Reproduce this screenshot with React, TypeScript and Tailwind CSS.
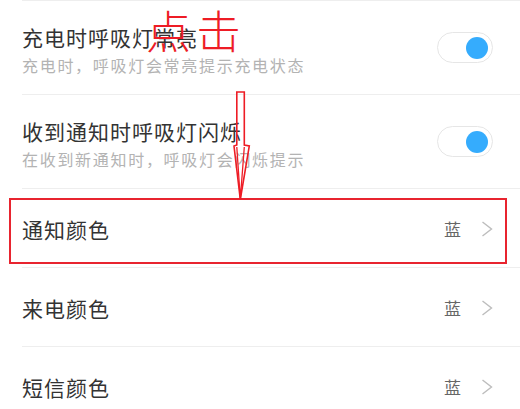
import React from 'react'

const font = { fontFamily: '"Noto Sans CJK SC", "Noto Sans", sans-serif' }

type ToggleRow = { title: string; desc: string }
type ValueRow = { title: string; value: string }

const toggleRows: ToggleRow[] = [
  { title: '充电时呼吸灯常亮', desc: '充电时，呼吸灯会常亮提示充电状态' },
  { title: '收到通知时呼吸灯闪烁', desc: '在收到新通知时，呼吸灯会闪烁提示' },
]

const valueRows: ValueRow[] = [
  { title: '通知颜色', value: '蓝' },
  { title: '来电颜色', value: '蓝' },
  { title: '短信颜色', value: '蓝' },
]

function Toggle() {
  return (
    <div className="flex h-[31px] w-[56px] items-center justify-end rounded-full border border-[#e6e6e6] bg-white pr-[4px]">
      <div className="h-[22px] w-[22px] rounded-full bg-[#35acfd]" />
    </div>
  )
}

function Chevron() {
  return (
    <svg width="12" height="16" viewBox="0 0 12 16" fill="none">
      <path d="M1.5 1 L10.5 8 L1.5 15" stroke="#bdbdbd" strokeWidth="1.4" strokeLinejoin="miter" />
    </svg>
  )
}

function Arrow() {
  return (
    <svg
      className="absolute left-[228px] top-[88px]"
      width="26"
      height="116"
      viewBox="228 88 26 116"
      fill="none"
    >
      <path
        d="M236.8 92 L236.8 145 L234 146 L240.3 199.5 L249.3 146 L244.3 145 L244.3 92 Z"
        stroke="#ee1c25"
        strokeWidth="1.6"
        strokeLinejoin="miter"
      />
      <path d="M236.8 147 L240.3 199 L244.3 147" stroke="#ee1c25" strokeWidth="1.3" />
    </svg>
  )
}

export default function App() {
  return (
    <div className="relative h-[409px] w-[520px] overflow-hidden bg-white" style={font}>
      <div className="ml-[22px] h-px bg-[#eeeeee]" />

      {toggleRows.map((row) => (
        <div
          key={row.title}
          className="ml-[22px] flex h-[94px] items-center justify-between border-b border-[#eeeeee] pr-[27px]"
        >
          <div className="flex flex-col pt-[9px]">
            <span className="text-[21px] leading-[26px] tracking-[1px] text-[#333333]">{row.title}</span>
            <span className="text-[16px] leading-[30px] tracking-[1.7px] text-[#b3b3b3]">{row.desc}</span>
          </div>
          <Toggle />
        </div>
      ))}

      {valueRows.map((row) => (
        <div
          key={row.title}
          className="ml-[22px] flex h-[79px] items-center justify-between border-b border-[#eeeeee] pr-[27px]"
        >
          <span className="pt-[2px] text-[21px] leading-[26px] tracking-[1px] text-[#333333]">{row.title}</span>
          <div className="flex items-center gap-[20px] pt-[2px]">
            <span className="text-[17px] leading-[22px] text-[#666666]">{row.value}</span>
            <Chevron />
          </div>
        </div>
      ))}

      {/* annotation overlay */}
      <div className="pointer-events-none absolute left-[9px] top-[198px] h-[66px] w-[498px] border-2 border-[#e8242f]" />
      <Arrow />
      <span className="pointer-events-none absolute left-[146px] top-[7px] text-[45px] font-light leading-none tracking-[5px] text-[#ee1c25]">
        点击
      </span>
    </div>
  )
}
